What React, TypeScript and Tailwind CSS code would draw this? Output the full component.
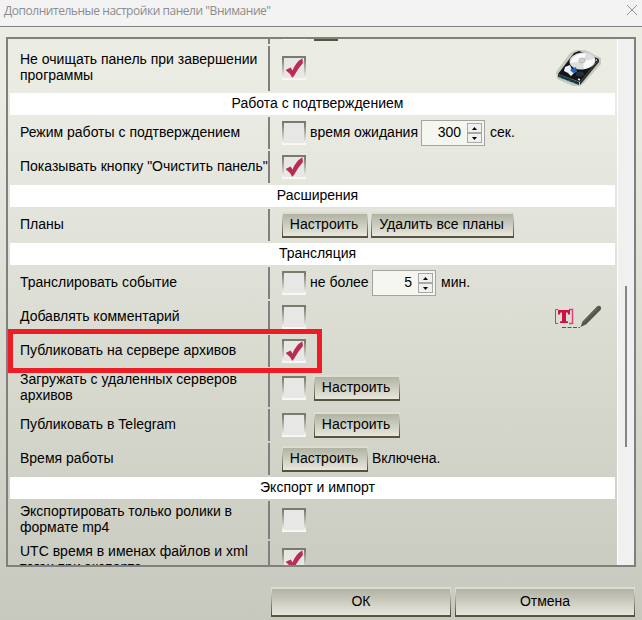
import type { ReactNode } from "react";

function Check({ on = false, className = "" }: { on?: boolean; className?: string }) {
  return (
    <div className={`h-6 w-6 shrink-0 bg-gradient-to-b from-[#7c7a6c] from-10% to-[#f8f8f4] to-95% p-[2px] ${className}`}>
      <div className="h-5 w-5 bg-[#e7e7e5]">
        {on && (
          <svg className="block" width="20" height="20" viewBox="2 2 20 20">
            <path d="M3.600 14 8.600 11.500 10.600 14.500Q13.400 6.500 20.400 2.300L20.900 7Q16 12.500 12 20L10.200 21.800Q8.400 17.500 3.600 14Z" fill="#b92d52" />
          </svg>
        )}
      </div>
    </div>
  );
}

function Btn({ children, className = "" }: { children?: ReactNode; className?: string }) {
  return (
    <button className={`block shrink-0 bg-gradient-to-b from-[#dfddcf] from-10% to-[#57533f] to-90% p-[1px] pt-[2px] pb-[2px] ${className}`}>
      <span className="flex h-full w-full items-center justify-center bg-gradient-to-b from-[#b0b3a4] to-[#e9e7dc] pb-[2px] whitespace-nowrap">
        {children}
      </span>
    </button>
  );
}

function Arrow({ up = false }: { up?: boolean }) {
  return (
    <div className="flex h-[10px] w-[15px] items-center justify-center border border-[#a8a8a8] bg-[#f0f0f0]">
      <svg width="5" height="3" viewBox="0 0 5 3">
        <path d={up ? "M0 3 2.5 0 5 3Z" : "M0 0 2.5 3 5 0Z"} fill="#000" />
      </svg>
    </div>
  );
}

function Spin({ value }: { value: string }) {
  return (
    <div className="flex h-[26px] w-16 shrink-0 items-center border border-[#a3a3a3] bg-[#f5f6ef] pr-[2px]">
      <span className="flex-1 pr-[6px] pb-[2px] text-right">{value}</span>
      <div className="flex flex-col">
        <Arrow up />
        <Arrow />
      </div>
    </div>
  );
}

function Row({ label, children, className = "h-8" }: { label: string; children?: ReactNode; className?: string }) {
  return (
    <div className={`flex shrink-0 ${className}`}>
      <div className="flex w-[258px] shrink-0 items-center pb-[2px] pl-[10px]">
        <span className="whitespace-pre">{label}</span>
      </div>
      <div className="w-[2px] shrink-0 bg-[#808080]" />
      <div className="flex flex-1 items-center pl-3">{children}</div>
    </div>
  );
}

function Text({ children, className = "ml-1" }: { children: ReactNode; className?: string }) {
  return <span className={`pb-[2px] whitespace-nowrap ${className}`}>{children}</span>;
}

function Heading({ children }: { children: ReactNode }) {
  return (
    <div className="flex h-[22px] shrink-0 items-center justify-center bg-white pb-[2px] pl-[10px]">{children}</div>
  );
}

function Disk() {
  return (
    <svg className="mr-[14px] mb-px ml-auto" width="45" height="36" viewBox="0 0 45 36">
      <path d="M0 22 14 3 20 0H29L45 8V14L28 33 24 36H17L1 29Z" fill="#c5cabc" />
      <path d="M2 24 18 3 23 1 43 9 24 32Z" fill="#121619" />
      <path d="M2 24v3l21 8v-3Z" fill="#17343c" />
      <path d="M24 32v3L43 12V9Z" fill="#292c2d" />
      <path d="M3 27 18 33" stroke="#38a8b8" strokeDasharray="2 3" />
      <ellipse cx="26.5" cy="11" rx="13" ry="8.500" fill="#dcdedd" transform="rotate(-4 26.5 11)" />
      <path d="M14 13Q17 3 30 3.500L27 11ZM27 11 39 9Q38 17 28 19Z" fill="#fafafa" />
      <ellipse cx="26" cy="10.5" rx="3" ry="2.500" fill="#d0d0d0" stroke="#aaa" strokeWidth=".7" />
      <path d="M9 17 14 15 16 20 19 22 15 26 12 23 8 21Z" fill="#eef1fb" />
      <path d="M14 20 20 17 21 22 17 23Z" fill="#2464b7" />
      <ellipse cx="24" cy="24" rx="4" ry="2.500" fill="#23323a" />
      <path d="m22 29 2 1M40 10h1" stroke="#dce4e8" strokeWidth="1.500" />
    </svg>
  );
}

function EditText() {
  return (
    <svg className="mr-[14px] ml-auto" width="47" height="24" viewBox="0 0 47 24">
      <path d="M4 4.500H1.500V18.500H4" fill="none" stroke="#6b6b61" />
      <path d="M15 4.500h3.500V18.500H15" fill="none" stroke="#e0407b" strokeWidth="1.500" />
      <path d="M4 5h12v4.500h-1.800l-.6-2h-1.600v8.500l2 .6V18H6v-1.400l2-.6V7.500H6.400l-.6 2H4Z" fill="#cf0f48" />
      <path d="M8 22.500h18" stroke="#55564c" strokeDasharray="4 1.500" />
      <path d="M26.500 22 28.500 16.500 42.500 2Q45-.2 46.500 1.500T46 5.500L32 19.500Z" fill="#56574b" />
      <path d="M29 17.500 44 2.500" stroke="#74766a" strokeWidth=".8" />
    </svg>
  );
}

export default function App() {
  return (
    <div className="flex h-[620px] w-[642px] flex-col overflow-hidden bg-[#ebece4] font-['Liberation_Sans',Arial,sans-serif] text-[14px] leading-4 text-black">
      <div className="flex h-[27px] shrink-0 items-start justify-between border-b border-[#808080] bg-[#f3f3f3] pr-[5px] pl-1">
        <span className="pt-[3px] font-['Open_Sans','Noto_Sans',sans-serif] text-[12px] tracking-[-0.46px] whitespace-nowrap text-[#8c8c8c]">
          Дополнительные настройки панели "Внимание"
        </span>
        <svg className="mt-[5px]" width="10" height="10" viewBox="0 0 10 10">
          <path d="m0 0 10 10M10 0 0 10" stroke="#929292" />
        </svg>
      </div>
      <div className="flex flex-1 flex-col bg-linear-[180deg,#ebece4_0%,#eaebe3_13%,#dfe1d8_41%,#d6d8cd_62%,#d0d1c6_80%,#c8c9be_100%] pt-[10px] pl-[6px]">
        <div className="relative h-[530px] w-[630px] shrink-0 border-2 border-[#808080]">
          <div className="flex h-full overflow-hidden">
            <div className="-mt-[27px] flex w-[609px] shrink-0 flex-col gap-[2px] px-[2px]">
              <Row label="">
                <Check />
                <Btn className="ml-2 h-[26px] w-6" />
              </Row>
              <Row label={"Не очищать панель при завершении\nпрограммы"} className="h-[45px] [&>div:first-child]:pb-[3px]">
                <Check on className="mb-px" />
                <Disk />
              </Row>
              <Heading>Работа с подтверждением</Heading>
              <Row label="Режим работы с подтверждением">
                <Check />
                <Text className="w-[111px] pl-1">время ожидания</Text>
                <div className="ml-1"><Spin value="300" /></div>
                <Text className="ml-[5px]">сек.</Text>
              </Row>
              <Row label={'Показывать кнопку "Очистить панель"'}>
                <Check on />
              </Row>
              <Heading>Расширения</Heading>
              <Row label="Планы">
                <Btn className="h-[26px] w-[86px] *:pr-[2px]">Настроить</Btn>
                <Btn className="ml-[3px] h-[26px] w-[143px] *:pr-[2px]">Удалить все планы</Btn>
              </Row>
              <Heading>Трансляция</Heading>
              <Row label="Транслировать событие">
                <Check />
                <Text className="w-[66px] pl-1">не более</Text>
                <Spin value="5" />
                <Text className="ml-[5px]">мин.</Text>
              </Row>
              <Row label="Добавлять комментарий">
                <Check />
                <EditText />
              </Row>
              <Row label="Публиковать на сервере архивов">
                <Check on />
              </Row>
              <Row label={"Загружать с удаленных серверов\nархивов"} className="h-[38px]">
                <Check />
                <Btn className="ml-2 h-[26px] w-[86px] *:pr-[2px]">Настроить</Btn>
              </Row>
              <Row label="Публиковать в Telegram">
                <Check />
                <Btn className="ml-2 h-[26px] w-[86px] *:pr-[2px]">Настроить</Btn>
              </Row>
              <Row label="Время работы">
                <Btn className="h-[26px] w-[86px] *:pr-[2px]">Настроить</Btn>
                <Text>Включена.</Text>
              </Row>
              <Heading>Экспорт и импорт</Heading>
              <Row label={"Экспортировать только ролики в\nформате mp4"} className="h-[38px]">
                <Check />
              </Row>
              <Row label={"UTC время в именах файлов и xml\nтегах при экспорте"} className="h-[38px]">
                <Check on />
              </Row>
            </div>
            <div className="flex w-[17px] shrink-0 justify-center border-l border-white bg-[#f0f0f0] pt-[247px]">
              <div className="h-[161px] w-[2px] bg-[#858585]" />
            </div>
          </div>
          <div className="absolute top-[290px] left-0 h-[44px] w-[314px] border-[5px] border-[#ee1c24]" />
        </div>
        <div className="mt-5 flex gap-1 pl-[265px]">
          <Btn className="h-[30px] w-[180px]">ОК</Btn>
          <Btn className="h-[30px] w-[180px]">Отмена</Btn>
        </div>
      </div>
    </div>
  );
}
